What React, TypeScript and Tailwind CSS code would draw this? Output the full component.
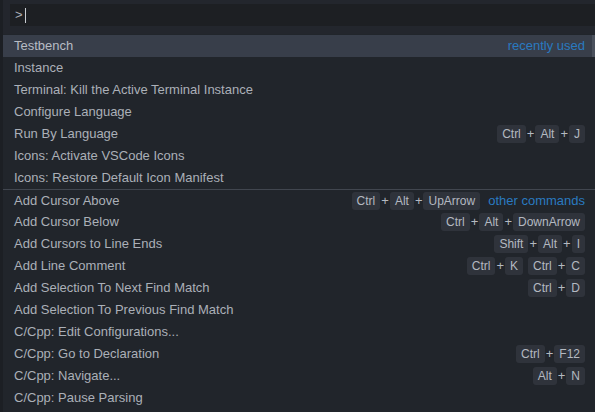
import React from "react";

type Row = {
  label: string;
  keys?: string[][];
  extra?: string;
  selected?: boolean;
  sep?: boolean;
};

const rows: Row[] = [
  { label: "Testbench", extra: "recently used", selected: true },
  { label: "Instance" },
  { label: "Terminal: Kill the Active Terminal Instance" },
  { label: "Configure Language" },
  { label: "Run By Language", keys: [["Ctrl", "Alt", "J"]] },
  { label: "Icons: Activate VSCode Icons" },
  { label: "Icons: Restore Default Icon Manifest" },
  { label: "Add Cursor Above", keys: [["Ctrl", "Alt", "UpArrow"]], extra: "other commands", sep: true },
  { label: "Add Cursor Below", keys: [["Ctrl", "Alt", "DownArrow"]] },
  { label: "Add Cursors to Line Ends", keys: [["Shift", "Alt", "I"]] },
  { label: "Add Line Comment", keys: [["Ctrl", "K"], ["Ctrl", "C"]] },
  { label: "Add Selection To Next Find Match", keys: [["Ctrl", "D"]] },
  { label: "Add Selection To Previous Find Match" },
  { label: "C/Cpp: Edit Configurations..." },
  { label: "C/Cpp: Go to Declaration", keys: [["Ctrl", "F12"]] },
  { label: "C/Cpp: Navigate...", keys: [["Alt", "N"]] },
  { label: "C/Cpp: Pause Parsing" },
];

function Chord({ keys }: { keys: string[] }) {
  return (
    <div className="flex items-center">
      {keys.map((k, i) => (
        <React.Fragment key={i}>
          {i > 0 && <span className="mx-[1px] text-[13px] text-[#b4b9c1]">+</span>}
          <span className="flex h-[18px] items-center rounded-[3px] bg-[#2f333b] px-[5px] text-[12px] text-[#b4b9c1]">
            {k}
          </span>
        </React.Fragment>
      ))}
    </div>
  );
}

export default function App() {
  return (
    <div
      className="flex h-[412px] w-[595px] overflow-hidden bg-[#1c1f24] text-[#abb0b8]"
      style={{ fontFamily: '"Liberation Sans", Arial, sans-serif' }}
    >
      <div className="ml-[3px] flex w-[592px] flex-col bg-[#21252b]">
        <div className="bg-[#23262d] pb-[8px] pl-[7px] pt-[4px]">
          <div className="flex h-[22px] items-center bg-[#1d1f23] pl-[5px] text-[13px] text-[#abb0b8]">
            <span>&gt;</span>
            <span className="ml-[2px] inline-block h-[15px] w-[1px] bg-[#c8ccd2]" />
          </div>
        </div>
        <div className="flex flex-col pt-[1px]">
          {rows.map((r, i) => (
            <div
              key={i}
              className={
                "relative flex h-[22px] shrink-0 items-center justify-between pl-[11px] pr-[10px] text-[13px] " +
                (r.selected ? "bg-[#383e4a] text-[#b7bcc4] " : "") +
                (r.sep ? "border-t border-[#41464f] " : "")
              }
            >
              <span>{r.label}</span>
              <div className="flex items-center gap-[5px]">
                {r.keys && r.keys.map((c, j) => <Chord key={j} keys={c} />)}
                {r.extra && (
                  <span className={"text-[13px] text-[#2a7ac0] " + (r.keys ? "ml-[3px]" : "")}>{r.extra}</span>
                )}
              </div>
              {r.selected && <div className="absolute right-0 top-0 h-full w-[3px] bg-[#4a505c]" />}
            </div>
          ))}
        </div>
      </div>
    </div>
  );
}
